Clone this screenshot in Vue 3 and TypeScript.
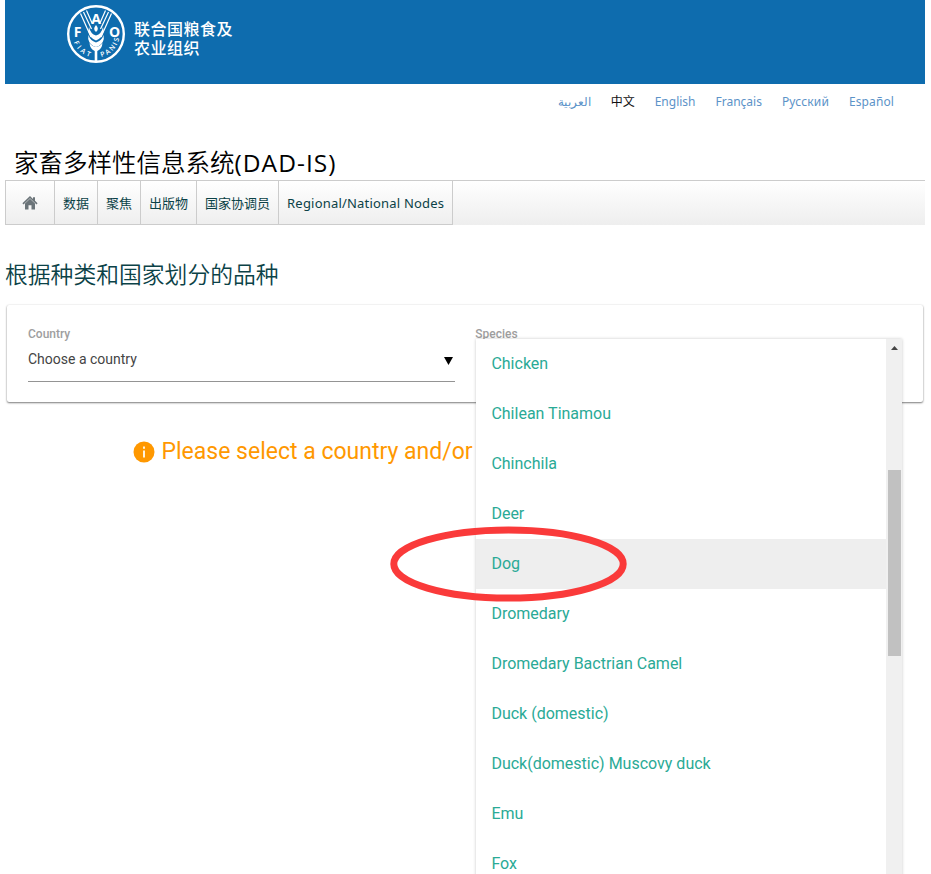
<script setup lang="ts">
interface Language { label: string; code: string; active?: boolean }

const languages: Language[] = [
  { label: 'العربية', code: 'ar' },
  { label: '中文', code: 'zh', active: true },
  { label: 'English', code: 'en' },
  { label: 'Français', code: 'fr' },
  { label: 'Русский', code: 'ru' },
  { label: 'Español', code: 'es' },
]

const menu: string[] = ['数据', '聚焦', '出版物', '国家协调员']

const species: string[] = [
  'Chicken', 'Chilean Tinamou', 'Chinchila', 'Deer', 'Dog', 'Dromedary',
  'Dromedary Bactrian Camel', 'Duck (domestic)', 'Duck(domestic) Muscovy duck', 'Emu', 'Fox',
]
const hovered = 'Dog'
</script>

<template>
  <div class="page">
    <header class="banner">
      <svg class="emblem" viewBox="0 0 60 60" width="60" height="60">
        <defs>
          <path id="motto-left" d="M7.550 37.300 A23.600 23.600 0 0 0 24.700 53" />
          <path id="motto-right" d="M34.900 53.100 A23.600 23.600 0 0 0 53.400 32.900" />
        </defs>
        <circle cx="30" cy="30" r="27.800" fill="none" stroke="#fff" stroke-width="2.400" />
        <g fill="none" stroke="#fff" stroke-width="1.200">
          <path d="M14.500 9.500 L25 33 M17.500 8 L25.500 25 M20.500 6.500 L26 19 M45.500 9.500 L35 33 M42.500 8 L34.500 25 M39.500 6.500 L34 19" />
        </g>
        <g fill="#fff">
          <path d="M30 21 q3.600 4 0 7 q-3.600-3 0-7z" />
          <path d="M23 23 q1.500 7 7 8.500 q5.500-1.500 7-8.500 l.7 4 q-1.200 7-7.700 9.500 q-6.500-2.500-7.700-9.500z" />
          <path d="M22.500 31 q1.500 5.500 7.500 7.500 q6-2 7.500-7.500 l.3 4 q-1.500 6.500-7.800 8 q-6.300-1.500-7.800-8z" />
          <path d="M23.500 39 q2.500 3.500 6.500 4 q4-.5 6.500-4 q-.5 6-5.200 8 v11 h-2.600 v-11 q-4.700-2-5.200-8z" />
        </g>
        <g class="letters">
          <text x="11.500" y="32.500">F</text>
          <text x="30" y="19.500">A</text>
          <text x="48.500" y="32.500">O</text>
        </g>
        <text class="motto"><textPath href="#motto-left" startOffset="1" textLength="22">FIAT</textPath></text>
        <text class="motto"><textPath href="#motto-right" startOffset="0.500" textLength="27">PANIS</textPath></text>
      </svg>
      <div class="org">联合国粮食及<br>农业组织</div>
    </header>

    <nav class="languages">
      <a v-for="l in languages" :key="l.code" :class="[l.code, { active: l.active }]">{{ l.label }}</a>
    </nav>

    <h1 class="site-title">家畜多样性信息系统<span>(DAD-IS)</span></h1>

    <nav class="menu">
      <a class="home">
        <svg viewBox="0 0 16 16" width="16" height="16" fill="#6b7479">
          <path d="M8 1 11 3.900 V2.300 h2 v3.500 L15.600 8.300 14.500 9.400 8 3.200 1.500 9.400 .4 8.300z" />
          <path d="M8 3.700 L13 8.500 V14.500 H9.500 V10.300 H6.500 v4.200 H3 V8.500z" />
        </svg>
      </a>
      <a v-for="m in menu" :key="m">{{ m }}</a>
      <a class="nodes">Regional/National Nodes</a>
    </nav>

    <h2 class="heading">根据种类和国家划分的品种</h2>

    <section class="card">
      <div class="field">
        <label>Country</label>
        <div class="select">
          <span>Choose a country</span>
          <svg width="9" height="8" viewBox="0 0 9 8"><path d="M0 0h9L4.500 8z" /></svg>
        </div>
      </div>
      <div class="field"><label>Species</label></div>
    </section>

    <p class="notice">
      <svg width="22" height="22" viewBox="0 0 22 22">
        <circle cx="11" cy="11" r="10.500" fill="#ff9800" />
        <path d="M10 5.500h2v2.200h-2z M10 9.500h2v7h-2z" fill="#fff3dd" />
      </svg>
      <span>Please select a country and/or</span>
    </p>

    <div class="dropdown">
      <ul class="options">
        <li v-for="s in species" :key="s" :class="{ hovered: s === hovered }">{{ s }}</li>
      </ul>
      <div class="scrollbar">
        <svg width="7" height="4" viewBox="0 0 7 4"><path d="M3.500 0 7 4H0z" fill="#444" /></svg>
        <div class="thumb"></div>
      </div>
    </div>

    <svg class="marker" width="240" height="78" viewBox="0 0 240 78">
      <ellipse cx="119.500" cy="39" rx="114.700" ry="34" fill="none" stroke="#fa3a3a" stroke-width="7" />
    </svg>
  </div>
</template>

<style>
body { background: #fff; overflow: hidden; }
</style>

<style scoped>
.page {
  position: relative;
  box-sizing: border-box;
  width: 931px;
  height: 874px;
  padding: 0 6px 0 5px;
  overflow: hidden;
  font-family: "Noto Sans", "Noto Sans CJK SC", sans-serif;
}
.banner {
  display: flex;
  box-sizing: border-box;
  height: 84px;
  padding: 4px 0 0 61px;
  background: #0e6cae;
  color: #fff;
}
.emblem { flex: none; }
.letters { fill: #fff; font: 700 14px "Open Sans", sans-serif; text-anchor: middle; }
.motto { fill: #fff; font: 600 6.800px "Open Sans", sans-serif; }
.org {
  margin: 15px 0 0 8px;
  font: 500 16px/19px "Noto Sans CJK SC", sans-serif;
  letter-spacing: 0.5px;
}
.languages {
  display: flex;
  justify-content: flex-end;
  gap: 20px;
  height: 36px;
  padding-right: 31px;
  font-size: 12px;
  line-height: 36px;
  color: #5c93c8;
}
.languages .active { color: #111; }
.languages .es { letter-spacing: 0.1px; }
.languages .ru { letter-spacing: 0.15px; }
.site-title {
  height: 36px;
  margin: 24px 0 0 9px;
  font: 350 24.500px/36px "Noto Sans CJK SC", sans-serif;
  color: #000;
  white-space: nowrap;
}
.site-title span { font-family: "Open Sans", sans-serif; font-weight: 400; font-size: 24.500px; letter-spacing: 1.050px; }
.menu {
  display: flex;
  box-sizing: border-box;
  height: 45px;
  border-top: 1px solid #ccc;
  border-left: 1px solid #ccc;
  background: linear-gradient(#fff, #eee);
}
.menu a {
  display: flex;
  align-items: center;
  box-sizing: border-box;
  padding: 0 8px;
  border-right: 1px solid #ccc;
  border-bottom: 1px solid #ccc;
  font-size: 13px;
  color: #0b4247;
  white-space: nowrap;
}
.menu .home { justify-content: center; width: 49px; padding: 0; }
.menu .nodes { letter-spacing: 0.2px; }
.heading {
  height: 36px;
  margin: 31px 0 0;
  font: 350 22.800px/36px "Noto Sans CJK SC", sans-serif;
  color: #0b4247;
}
.card {
  display: flex;
  gap: 20.5px;
  box-sizing: border-box;
  height: 97px;
  margin: 13px 2px 0;
  padding: 21px 21px 20px;
  border-radius: 2px;
  box-shadow: 0 1px 2px rgba(0, 0, 0, .5), 0 0 2px rgba(0, 0, 0, .1);
  font-family: Roboto, sans-serif;
}
.field { width: 427px; }
.field label { display: block; font-size: 12px; font-weight: 500; line-height: 17px; color: #9e9e9e; }
.select {
  display: flex;
  align-items: center;
  justify-content: space-between;
  height: 38px;
  padding-right: 2px;
  border-bottom: 1px solid #949494;
  font-size: 14px;
  color: #444;
}
.select span { position: relative; top: -3px; }
.select svg { margin-top: -2px; }
.notice {
  display: flex;
  align-items: center;
  gap: 6.500px;
  height: 34px;
  margin: 33px 0 0 128px;
  font: 400 23px/34px Roboto, sans-serif;
  color: #ff9800;
  white-space: nowrap;
}
.notice svg { margin-top: -1px; }
.dropdown {
  position: absolute;
  top: 339px;
  left: 476px;
  display: flex;
  width: 426px;
  height: 551px;
  background: #fff;
  box-shadow: 0 0 3px rgba(0, 0, 0, .22);
}
.options { flex: 1; margin: 0; padding: 0; list-style: none; }
.options li {
  height: 50px;
  padding-left: 15.400px;
  font: 400 16px/50px Roboto, sans-serif;
  color: #2aaa96;
}
.options .hovered { background: #eee; }
.scrollbar {
  display: flex;
  flex-direction: column;
  align-items: center;
  box-sizing: border-box;
  width: 16px;
  padding-top: 7px;
  background: #f0f0f0;
}
.thumb { width: 13px; height: 186px; margin-top: 120px; background: #c1c1c1; }
.marker { position: absolute; top: 525px; left: 389px; }
</style>
